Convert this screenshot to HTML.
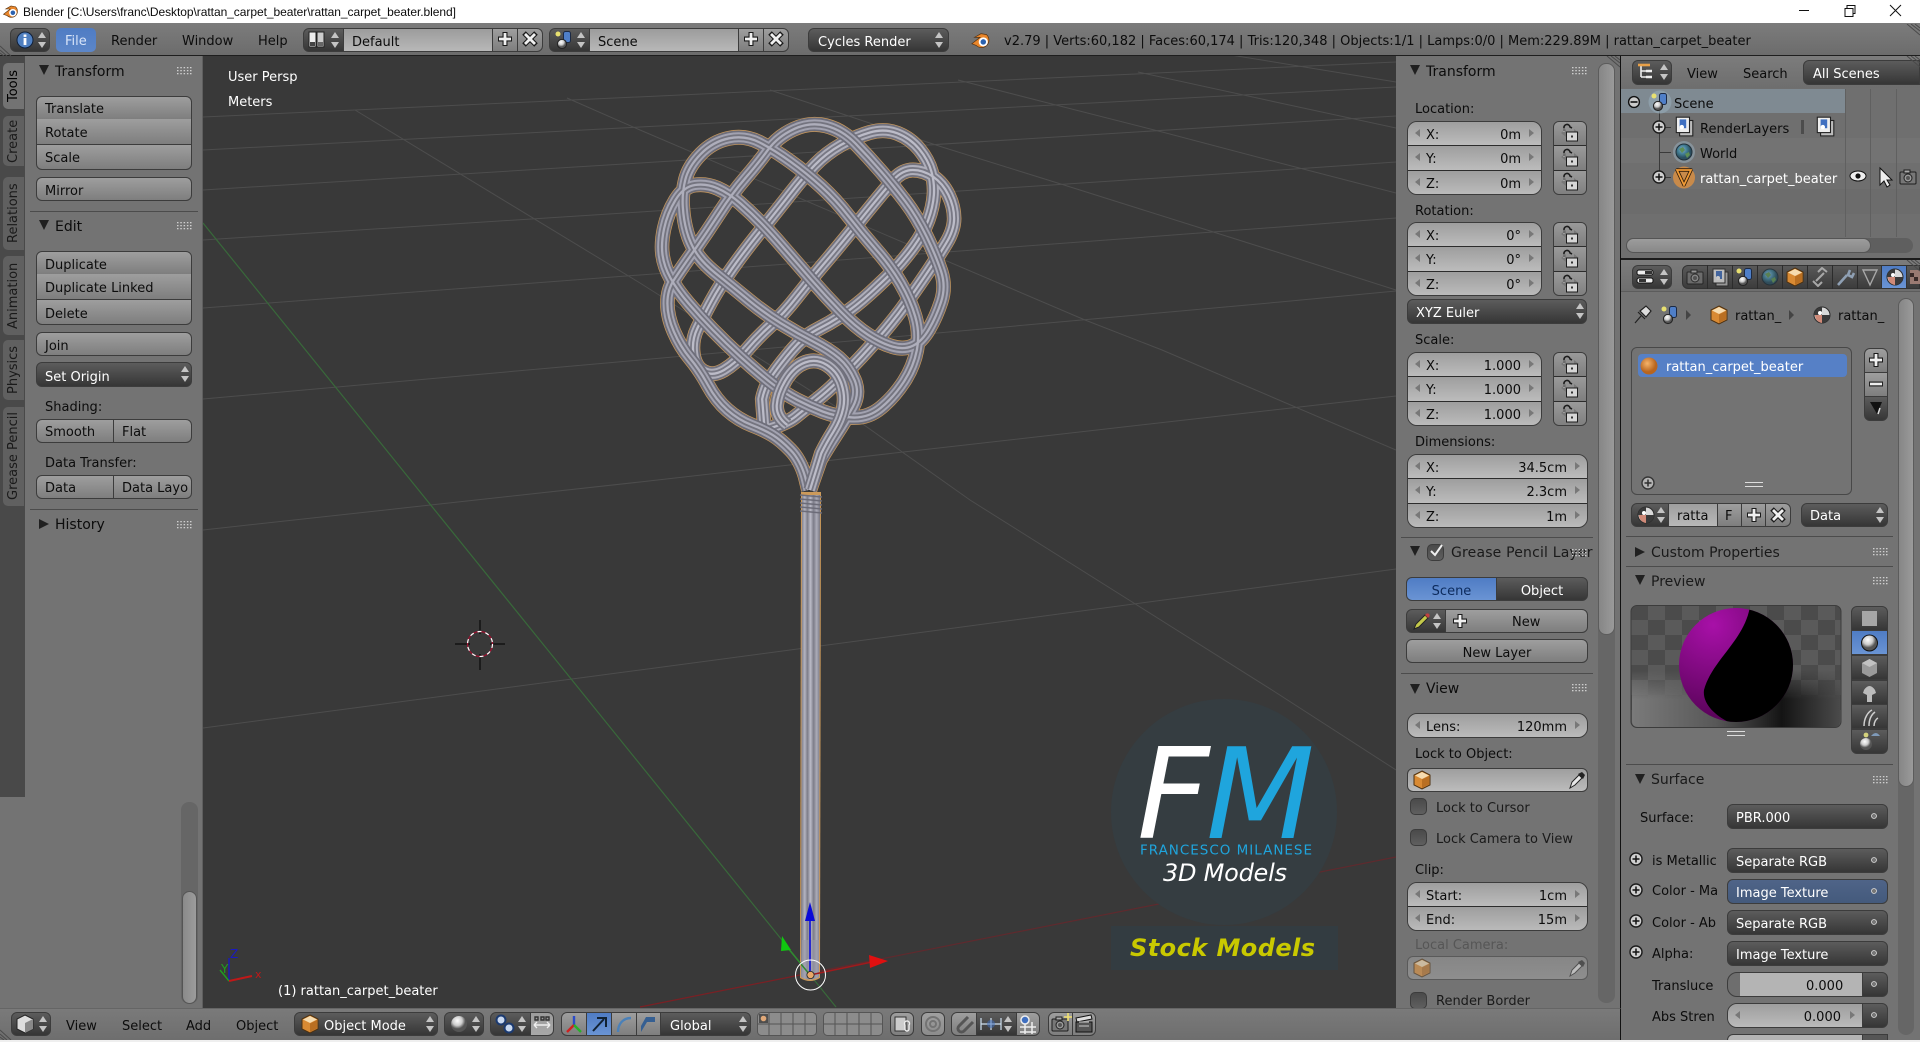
<!DOCTYPE html>
<html><head><meta charset="utf-8"><title>Blender</title>
<style>
*{box-sizing:border-box}
html,body{margin:0;width:1920px;height:1042px;overflow:hidden;background:#737373;font:13px "DejaVu Sans",sans-serif;color:#0c0c0c}
.a{position:absolute}
.t{position:absolute;white-space:nowrap;line-height:16px;height:16px;margin-top:1px}
.w{color:#fff}
.b{position:absolute;border:1px solid #3c3c3c;background:linear-gradient(#9e9e9e,#7e7e7e);line-height:27px;padding-left:8px;white-space:nowrap;overflow:hidden}
.k{background:linear-gradient(#5c5c5c,#363636);color:#fff}
.r{border-radius:6px}.rt{border-radius:6px 6px 0 0}.rb{border-radius:0 0 6px 6px}
.rl{border-radius:6px 0 0 6px}.rr{border-radius:0 6px 6px 0}
.ng{position:absolute;border:1px solid #3c3c3c;border-radius:10px;overflow:hidden}
.n{position:relative;height:24.4px;background:linear-gradient(#9e9e9e,#bcbcbc);border-bottom:1px solid #2c2c2c;line-height:27px;padding-left:18px;white-space:nowrap}
.n:last-child{border-bottom:0}
.n s{position:absolute;right:20px;top:0;text-decoration:none}
.n:before,.n:after{content:"";position:absolute;top:7px;border:4px solid transparent}
.n:before{left:3px;border-right:5px solid #787878}
.n:after{right:3px;border-left:5px solid #787878}
.td{position:absolute;width:0;height:0;border-left:5px solid transparent;border-right:5px solid transparent;border-top:10px solid #202020}
.tr{position:absolute;width:0;height:0;border-top:5px solid transparent;border-bottom:5px solid transparent;border-left:10px solid #202020}
.sep{position:absolute;height:1px;background:#4c4c4c;border-bottom:0}
.h{font-size:14px}
.tab{position:absolute;left:3px;width:21px;background:#606060;border-radius:5px 0 0 5px}
.tab span{position:absolute;left:0;top:0;width:21px;height:100%;writing-mode:vertical-rl;transform:rotate(180deg);text-align:center;line-height:21px;color:#1a1a1a}
.i{position:absolute;width:20px;height:20px;overflow:visible}
.cb{position:absolute;width:17px;height:17px;border:1px solid #3c3c3c;border-radius:5px;background:linear-gradient(#4a4a4a,#5f5f5f)}
svg{display:block}
</style></head>
<body>
<svg width="0" height="0" style="position:absolute">
<defs>
<linearGradient id="st" x1="0" x2="1" y1="0" y2="0"><stop offset="0" stop-color="#767682"/><stop offset=".2" stop-color="#b4b4c0"/><stop offset=".34" stop-color="#7c7c88"/><stop offset=".5" stop-color="#bcbcc8"/><stop offset=".66" stop-color="#7c7c88"/><stop offset=".82" stop-color="#acacb8"/><stop offset="1" stop-color="#767682"/></linearGradient>
<radialGradient id="balo" cx=".4" cy=".35"><stop offset="0" stop-color="#f6b46a"/><stop offset="1" stop-color="#b8651f"/></radialGradient>
<radialGradient id="balw" cx=".4" cy=".3"><stop offset="0" stop-color="#fff"/><stop offset=".6" stop-color="#ccc"/><stop offset="1" stop-color="#555"/></radialGradient>
<radialGradient id="balb" cx=".4" cy=".35"><stop offset="0" stop-color="#7fb0d8"/><stop offset=".6" stop-color="#3f7a8f"/><stop offset="1" stop-color="#2c4f60"/></radialGradient>
<radialGradient id="mag" cx=".3" cy=".15" r=".8"><stop offset="0" stop-color="#a810a8"/><stop offset="1" stop-color="#5c045c"/></radialGradient>
<linearGradient id="flr" x1="0" x2="1" y1="0" y2="0"><stop offset="0" stop-color="#7a7a7a"/><stop offset=".4" stop-color="#585858"/><stop offset=".72" stop-color="#141414"/><stop offset="1" stop-color="#4a4a4a"/></linearGradient>
<linearGradient id="fmask" x1="0" x2="0" y1="0" y2="1"><stop offset="0" stop-color="#fff" stop-opacity="0"/><stop offset=".5" stop-color="#fff" stop-opacity="1"/></linearGradient>
<mask id="fm" maskUnits="userSpaceOnUse" x="1631" y="670" width="210" height="58"><rect x="1631" y="670" width="210" height="58" fill="url(#fmask)"/></mask>
<pattern id="chk" width="34" height="30" patternUnits="userSpaceOnUse" x="1631" y="605"><rect width="34" height="30" fill="#5a5a5a"/><rect width="17" height="15" fill="#4b4b4b"/><rect x="17" y="15" width="17" height="15" fill="#4b4b4b"/></pattern>
<clipPath id="sph"><circle cx="1736" cy="665" r="57"/></clipPath>
<path id="k1" d="M535 1170L525 1130Q510 1080 480 1050T425 1005T360 975T285 930T225 855T170 775T120 695T100 610T120 540T180 455T260 340T340 235T410 150T490 87.5T590 77.5T680 130T760 215T835 305T900 410T945 515T945 605T907.5 687.5T857.5 737.5T795 740T720 705T635 635T545 540T460 445T390 370T325 310T255 265T185 255T125 300T90 385T85 465T110 535T165 610T240 690T325 770T415 845T500 900T580 935T670 952.5T760 922.5T830 845T870 750T865 650T820 550T745 450T660 350T575 260T480 185T385 127.5T290 115T202.5 162.5T155 240T147.5 320T160 395T190 460T255 525T350 600T450 670T550 725T630 775T677.5 840T672.5 920T620 1005T572.5 1080L540 1170" fill="none" stroke-linejoin="round"/>
<path id="k2" d="M400 990Q470 970 495 950T560 900T650 820T750 715T840 605T907.5 510T960 430T985 355T967.5 285T920 230T857.5 210T797.5 240T695 360T580 495T500 590T420 675T345 750T275 810T212.5 815T180 760T192.5 685T235 605T300 505T390 390T480 280T555 195T635 135T725 97.5T810 100T877.5 147.5T915 215T922.5 285T905 360T860 440T800 510T725 580T640 645T560 690T485 750T425 825T392.5 897.5L400 990" fill="none" stroke-linejoin="round"/>
<path id="k3" d="M470 975Q435 950 437.5 915T465 840T525 787.5T592.5 795T637.5 852.5T642.5 925T612.5 995T575 1060L540 1170" fill="none" stroke-linejoin="round"/>
<symbol id="lock" viewBox="0 0 20 20"><path d="M4 8V5a3 3 0 0 1 6-1l2 1" fill="none" stroke="#1c1c1c" stroke-width="1.6"/><path d="M4 9V5" stroke="#eee" stroke-width=".6"/><rect x="6.5" y="9" width="11" height="9" fill="#d6d6d6" stroke="#1c1c1c"/><rect x="11" y="12.5" width="2" height="2" fill="#333"/></symbol>
<symbol id="ud" viewBox="0 0 10 20"><polygon points="5,2 9,8 1,8" fill="#c4c4c4"/><polygon points="1,12 9,12 5,18" fill="#c4c4c4"/></symbol>
<symbol id="plus" viewBox="0 0 20 20"><path d="M10 3V17M3 10H17" stroke="#1a1a1a" stroke-width="5"/><path d="M10 4V16M4 10H16" stroke="#f0f0f0" stroke-width="2.8"/></symbol>
<symbol id="x" viewBox="0 0 20 20"><path d="M4 4L16 16M16 4L4 16" stroke="#1a1a1a" stroke-width="5"/><path d="M5 5L15 15M15 5L5 15" stroke="#f0f0f0" stroke-width="2.8"/></symbol>
<symbol id="cube" viewBox="0 0 20 20"><polygon points="10,1 18,5 18,15 10,19 2,15 2,5" fill="#d98a33" stroke="#4c3010"/><polygon points="10,2 17,5.5 10,9 3,5.5" fill="#f6dcb0"/><polygon points="10,9.5 17,6 17,14.5 10,18" fill="#b96f22"/></symbol>
<symbol id="scene" viewBox="0 0 20 20"><circle cx="4" cy="4" r="2.5" fill="#e8e070"/><rect x="9.5" y="1.5" width="7" height="11" rx="2" fill="#4f7fc8" stroke="#1c2a44"/><circle cx="8" cy="14" r="4.6" fill="url(#balw)" stroke="#222"/></symbol>
<symbol id="mat" viewBox="0 0 20 20"><circle cx="10" cy="10" r="8" fill="#d9d9d9" stroke="#2a2a2a"/><path d="M10 2a8 8 0 0 0-8 8h8zM10 10h8a8 8 0 0 1-8 8z" fill="#3a3a3a"/><path d="M10 10h-7a8 8 0 0 0 7 8z" fill="#d08a78"/><circle cx="8" cy="8" r="2" fill="#fff"/></symbol>
<symbol id="rl" viewBox="0 0 20 20"><rect x="6" y="5" width="12" height="14" fill="#bdbdbd" stroke="#222"/><rect x="3" y="2" width="12" height="14" fill="#eee" stroke="#222"/><rect x="6" y="4" width="6" height="8" fill="#3f6fc0"/><circle cx="8" cy="11" r="2" fill="#fff"/></symbol>
<symbol id="world" viewBox="0 0 20 20"><circle cx="10" cy="10" r="8" fill="url(#balb)" stroke="#20303a"/><path d="M5 7l4-2 2 3-3 3zM11 12l4-2 1 3-3 3z" fill="#5d8e55"/></symbol>
<symbol id="mesh" viewBox="0 0 20 20"><path d="M3 3H17L10 18Z" fill="none" stroke="#2c1a08" stroke-width="3.4" stroke-linejoin="round"/><path d="M3 3H17L10 18Z" fill="none" stroke="#f09a36" stroke-width="1.8"/></symbol>
<symbol id="cp" viewBox="0 0 20 20"><circle cx="10" cy="10" r="6" fill="#cfcfcf" stroke="#1c1c1c" stroke-width="1.4"/><path d="M10 6.5V13.5M6.5 10H13.5" stroke="#111" stroke-width="1.5"/></symbol>
<symbol id="grip" viewBox="0 0 15 8"><g fill="#cfcfcf"><rect x="0" y="0" width="1.5" height="1.3"/><rect x="3.3" y="0" width="1.5" height="1.3"/><rect x="6.6" y="0" width="1.5" height="1.3"/><rect x="9.9" y="0" width="1.5" height="1.3"/><rect x="13" y="0" width="1.5" height="1.3"/><rect x="0" y="3" width="1.5" height="1.3"/><rect x="3.3" y="3" width="1.5" height="1.3"/><rect x="6.6" y="3" width="1.5" height="1.3"/><rect x="9.9" y="3" width="1.5" height="1.3"/><rect x="13" y="3" width="1.5" height="1.3"/><rect x="0" y="6" width="1.5" height="1.3"/><rect x="3.3" y="6" width="1.5" height="1.3"/><rect x="6.6" y="6" width="1.5" height="1.3"/><rect x="9.9" y="6" width="1.5" height="1.3"/><rect x="13" y="6" width="1.5" height="1.3"/></g></symbol>
<symbol id="cam" viewBox="0 0 20 20"><rect x="2" y="5" width="16" height="12" rx="1" fill="#777" stroke="#1c1c1c"/><rect x="6" y="3" width="6" height="3" fill="#aaa" stroke="#1c1c1c"/><circle cx="10" cy="11" r="4" fill="#999" stroke="#222"/><circle cx="10" cy="11" r="2" fill="#555"/></symbol>
<symbol id="blend" viewBox="0 0 24 24"><path d="M2 15L11 8H5l7-4 6 1a8 8 0 1 1-11 12z" fill="#e9862b" stroke="#5a3410" stroke-width=".8"/><circle cx="14.5" cy="13" r="5" fill="#fff"/><circle cx="14.5" cy="13" r="3" fill="#2b62b0"/></symbol>
</defs>
</svg>

<!-- viewport -->
<div class="a" style="left:203px;top:56px;width:1193px;height:952px;background:#393939"></div>
<svg class="a" style="left:0;top:0" width="1920" height="1042" viewBox="0 0 1920 1042">
<defs><clipPath id="vp"><rect x="203" y="56" width="1193" height="952"/></clipPath></defs>
<g clip-path="url(#vp)">
<g stroke="#4d4d4d" stroke-width="1" fill="none">
<path d="M203 117L1396 62M203 150L640 127L1280 93L1396 87M203 190L640 163L1280 123L1396 116M203 240L640 212L1280 170L1396 162M203 308L640 275L1280 227L1396 218M203 399L640 360L1280 302L1396 291M203 530L640 482L1396 396M203 728L640 670L1396 569"/>
<path d="M355 110L640 283L857 420L970 500L1272 690L1396 770M567 98L640 130L1085 320L1162 350L1396 450M770 90L942 147L1064 185L1207 230L1280 253L1396 290M958 80L1048 103L1166 133L1280 163L1396 193M1138 72L1280 103L1396 128M1200 50L1280 63L1396 82"/>
</g>
<path d="M203 223L836 1007" stroke="#38693a" stroke-width="1.2" fill="none"/>
<path d="M640 1007L810 973" stroke="#7a2024" stroke-width="1.2" fill="none"/>
<path d="M810 973L1396 857" stroke="#5f2a2e" stroke-width="1.2" fill="none"/>
<!-- cursor -->
<g fill="none"><path d="M480 620V634M480 654V670M455 644H470M490 644H505" stroke="#000" stroke-width="1"/><circle cx="480" cy="644" r="12.5" stroke="#a01030" stroke-width="1.2"/><circle cx="480" cy="644" r="12.5" stroke="#fff" stroke-width="1.2" stroke-dasharray="4 4"/></g>
<!-- knot -->
<g transform="translate(635 100) scale(.324 .3333)">
<g stroke="#cc9a5a"><use href="#k1" stroke-width="45"/><use href="#k2" stroke-width="45"/><use href="#k3" stroke-width="45"/></g>
<g id="ropes">
<use href="#k2" stroke="#72727e" stroke-width="41"/><use href="#k2" stroke="#aeaeba" stroke-width="30"/><use href="#k2" stroke="#787884" stroke-width="18"/><use href="#k2" stroke="#bcbcc8" stroke-width="7"/>
<use href="#k1" stroke="#6e6e7a" stroke-width="41"/><use href="#k1" stroke="#a2a2b0" stroke-width="30"/><use href="#k1" stroke="#74747f" stroke-width="18"/><use href="#k1" stroke="#aeaebb" stroke-width="7"/>
<use href="#k3" stroke="#72727e" stroke-width="41"/><use href="#k3" stroke="#aeaeba" stroke-width="30"/><use href="#k3" stroke="#787884" stroke-width="18"/><use href="#k3" stroke="#bcbcc8" stroke-width="7"/>
</g>
</g>
<!-- stem -->
<path d="M801 492H821L820 978Q810 984 800 978Z" fill="#cc9a5a"/>
<path d="M802 495H820L819 977Q810 982 801 977Z" fill="url(#st)"/>
<g stroke="#6c6c78" stroke-width="1.4"><path d="M800 495L822 497M800 499L822 501M800 503L822 505M800 507L822 509M800 511L822 513"/></g>
<path d="M802 940L819 940L819 977Q810 982 801 977Z" fill="#9a9aa8" opacity=".6"/>
<!-- manipulator -->
<path d="M810 975V918" stroke="#0a0ad8" stroke-width="1.6"/><polygon points="810,902 815,921 805,921" fill="#0a0ad8"/>
<path d="M810 975L872 962" stroke="#a01a1c" stroke-width="1.6"/><polygon points="888,961 869,955 870,968" fill="#e01010"/>
<path d="M810 975L787 947" stroke="#2f8a2f" stroke-width="1.4"/><polygon points="782,936 791,950 781,951" fill="#10c810"/>
<circle cx="810.5" cy="975" r="15" fill="none" stroke="#fff" stroke-width="1"/>
<circle cx="810.5" cy="975" r="3.6" fill="#e8a868" stroke="#222" stroke-width=".8"/>
<!-- axis widget -->
<path d="M229 981V958" stroke="#1a1ac0" stroke-width="1.4"/><path d="M229 981L220 970" stroke="#1fa01f" stroke-width="1.4"/><path d="M229 981L252 976" stroke="#c01818" stroke-width="2"/>
<text x="230" y="958" font-family="DejaVu Sans" font-size="12" fill="#1a1ac0">Z</text>
<text x="221" y="973" font-family="DejaVu Sans" font-size="12" fill="#1fa01f">Y</text>
<text x="255" y="978" font-family="DejaVu Sans" font-size="11" fill="#c01818">x</text>
<!-- logo -->
<circle cx="1224" cy="812" r="113" fill="#353d41"/>
<rect x="1111" y="926" width="227" height="44" fill="#333c41"/>
<text x="1137" y="838" font-family="DejaVu Sans" font-style="oblique" font-size="126" fill="#fff">F</text>
<text x="1206" y="838" font-family="DejaVu Sans" font-style="oblique" font-size="126" fill="#1fa5dd">M</text>
<text x="1140" y="854.5" font-family="DejaVu Sans" font-size="13.5" fill="#1fa5dd" textLength="172" lengthAdjust="spacing">FRANCESCO MILANESE</text>
<text x="1163" y="881" font-family="DejaVu Sans" font-style="oblique" font-size="24" fill="#fff" textLength="124">3D Models</text>
<text x="1130" y="956" font-family="DejaVu Sans" font-style="oblique" font-weight="bold" font-size="24" fill="#c9c900" textLength="185">Stock Models</text>
</g>
</svg>
<div class="t w" style="left:228px;top:69px">User Persp</div>
<div class="t w" style="left:228px;top:94px">Meters</div>
<div class="t w" style="left:278px;top:983px">(1) rattan_carpet_beater</div>

<!-- title bar -->
<div class="a" style="left:0;top:0;width:1920px;height:23px;background:#fff"></div>
<svg class="i" style="left:2px;top:3px;width:18px;height:18px"><use href="#blend" width="18" height="18"/></svg>
<div class="t" style="left:23px;top:3px;font:12px/16px 'Liberation Sans',sans-serif;letter-spacing:-.05px">Blender [C:\Users\franc\Desktop\rattan_carpet_beater\rattan_carpet_beater.blend]</div>
<svg class="a" style="left:1796px;top:0" width="110" height="22" fill="none" stroke="#111"><path d="M3 10.5H13"/><path d="M49 8.5h8v8h-8zM51 8V5.5h8v8h-2"/><path d="M94 5L105 16M105 5L94 16"/></svg>

<!-- top header -->
<div class="a" style="left:0;top:23px;width:1920px;height:33px;background:linear-gradient(#7c7c7c,#6c6c6c);border-bottom:1px solid #1e1e1e"></div>
<svg class="a" style="left:0;top:44px" width="16" height="12" stroke="#4a4a4a"><path d="M0 2L11 12M0 6L7 12M0 9L4 12"/></svg>
<svg class="a" style="left:1905px;top:24px" width="15" height="14" stroke="#4a4a4a"><path d="M2 0L15 11M6 0L15 7M10 0L15 4"/></svg>
<div class="b k r" style="left:10px;top:28px;width:40px;height:24px"></div>
<svg class="i" style="left:15px;top:30px"><circle cx="10" cy="10" r="8" fill="#4f7fc0" stroke="#10203a"/><rect x="8.6" y="8" width="2.8" height="7" fill="#fff"/><rect x="8.6" y="4.5" width="2.8" height="2.4" fill="#fff"/></svg>
<svg class="i" style="left:37px;top:30px;width:10px"><use href="#ud"/></svg>
<div class="a" style="left:56px;top:28px;width:40px;height:24px;background:linear-gradient(#4f7cc4,#5c86c8);border-radius:5px"></div>
<div class="t" style="left:65px;top:33px;color:#d8e4f8">File</div>
<div class="t" style="left:111px;top:33px">Render</div>
<div class="t" style="left:182px;top:33px">Window</div>
<div class="t" style="left:258px;top:33px">Help</div>

<div class="b k rl" style="left:303px;top:28px;width:41px;height:24px"></div>
<svg class="i" style="left:308px;top:31px;width:18px;height:18px"><rect x="1" y="1" width="7" height="15" fill="#eee" stroke="#222"/><rect x="9" y="1" width="7" height="15" fill="#ccc" stroke="#222"/><rect x="2" y="11" width="5" height="4" fill="#444"/><rect x="10" y="11" width="5" height="4" fill="#666"/></svg>
<svg class="i" style="left:330px;top:30px;width:10px"><use href="#ud"/></svg>
<div class="b" style="left:343px;top:28px;width:150px;height:24px;background:linear-gradient(#9c9c9c,#b8b8b8);padding-left:8px">Default</div>
<div class="b" style="left:492px;top:28px;width:26px;height:24px"></div>
<div class="b rr" style="left:517px;top:28px;width:26px;height:24px"></div>
<svg class="i" style="left:495px;top:29px"><use href="#plus"/></svg>
<svg class="i" style="left:520px;top:29px"><use href="#x"/></svg>

<div class="b k rl" style="left:549px;top:28px;width:41px;height:24px"></div>
<svg class="i" style="left:554px;top:30px"><use href="#scene"/></svg>
<svg class="i" style="left:576px;top:30px;width:10px"><use href="#ud"/></svg>
<div class="b" style="left:589px;top:28px;width:150px;height:24px;background:linear-gradient(#9c9c9c,#b8b8b8);padding-left:8px">Scene</div>
<div class="b" style="left:738px;top:28px;width:26px;height:24px"></div>
<div class="b rr" style="left:763px;top:28px;width:26px;height:24px"></div>
<svg class="i" style="left:741px;top:29px"><use href="#plus"/></svg>
<svg class="i" style="left:766px;top:29px"><use href="#x"/></svg>

<div class="b k r" style="left:808px;top:28px;width:141px;height:24px;padding-left:9px">Cycles Render</div>
<svg class="i" style="left:934px;top:30px;width:10px"><use href="#ud"/></svg>
<svg class="i" style="left:970px;top:30px;width:22px;height:22px"><use href="#blend" width="22" height="22"/></svg>
<div class="t" style="left:1004px;top:33px">v2.79 | Verts:60,182 | Faces:60,174 | Tris:120,348 | Objects:1/1 | Lamps:0/0 | Mem:229.89M | rattan_carpet_beater</div>

<!-- left tools -->
<div class="a" style="left:0;top:56px;width:203px;height:952px;background:#737373;border-right:1px solid #5f5f5f"></div>
<div class="a" style="left:0;top:56px;width:25px;height:741px;background:#494949"></div>
<div class="tab" style="top:63px;height:46px;background:#737373"><span style="color:#000">Tools</span></div>
<div class="tab" style="top:116px;height:50px"><span>Create</span></div>
<div class="tab" style="top:177px;height:73px"><span>Relations</span></div>
<div class="tab" style="top:256px;height:79px"><span>Animation</span></div>
<div class="tab" style="top:340px;height:60px"><span>Physics</span></div>
<div class="tab" style="top:407px;height:99px"><span>Grease Pencil</span></div>

<div class="td" style="left:39px;top:65px"></div>
<div class="t h" style="left:55px;top:63px">Transform</div>
<svg class="a" style="left:177px;top:67px" width="15" height="8"><use href="#grip"/></svg>
<div class="b rt" style="left:36px;top:96px;width:156px;height:24px;line-height:26px">Translate</div>
<div class="b" style="left:36px;top:119px;width:156px;height:26px;border-top:0;line-height:29px">Rotate</div>
<div class="b rb" style="left:36px;top:144px;width:156px;height:26px;line-height:28px">Scale</div>
<div class="b r" style="left:36px;top:177px;width:156px;height:24px">Mirror</div>
<div class="sep" style="left:30px;top:211px;width:168px"></div>
<div class="td" style="left:39px;top:220px"></div>
<div class="t h" style="left:55px;top:218px">Edit</div>
<svg class="a" style="left:177px;top:222px" width="15" height="8"><use href="#grip"/></svg>
<div class="b rt" style="left:36px;top:251px;width:156px;height:24px">Duplicate</div>
<div class="b" style="left:36px;top:274px;width:156px;height:26px;border-top:0;line-height:30px">Duplicate Linked</div>
<div class="b rb" style="left:36px;top:299px;width:156px;height:26px;line-height:29px">Delete</div>
<div class="b r" style="left:36px;top:332px;width:156px;height:24px">Join</div>
<div class="b k r" style="left:36px;top:362px;width:156px;height:25px;line-height:29px">Set Origin</div>
<svg class="i" style="left:180px;top:364px;width:10px"><use href="#ud"/></svg>
<div class="t" style="left:45px;top:399px">Shading:</div>
<div class="b rl" style="left:36px;top:419px;width:78px;height:24px;line-height:26px">Smooth</div>
<div class="b rr" style="left:113px;top:419px;width:79px;height:24px;line-height:26px">Flat</div>
<div class="t" style="left:45px;top:455px">Data Transfer:</div>
<div class="b rl" style="left:36px;top:475px;width:78px;height:24px;line-height:26px">Data</div>
<div class="b rr" style="left:113px;top:475px;width:79px;height:24px;line-height:26px">Data Layo</div>
<div class="sep" style="left:30px;top:509px;width:168px"></div>
<div class="tr" style="left:39px;top:519px"></div>
<div class="t h" style="left:55px;top:516px">History</div>
<svg class="a" style="left:177px;top:521px" width="15" height="8"><use href="#grip"/></svg>
<div class="a" style="left:181px;top:802px;width:17px;height:202px;background:#666;border-radius:8px"></div>
<div class="a" style="left:182px;top:891px;width:15px;height:113px;background:linear-gradient(90deg,#8a8a8a,#9c9c9c);border:1px solid #555;border-radius:8px"></div>

<!-- N panel -->
<div class="a" style="left:1396px;top:56px;width:225px;height:952px;background:#737373;border-right:1px solid #111"></div>
<div class="a" style="left:1598px;top:63px;width:17px;height:940px;background:#666;border-radius:8px"></div>
<div class="a" style="left:1598px;top:63px;width:17px;height:572px;background:linear-gradient(90deg,#868686,#9a9a9a);border:1px solid #5c5c5c;border-radius:8px"></div>
<svg class="a" style="left:1605px;top:56px" width="15" height="14" stroke="#4a4a4a"><path d="M2 0L15 11M6 0L15 7M10 0L15 4"/></svg>
<div class="td" style="left:1410px;top:65px"></div>
<div class="t h" style="left:1426px;top:63px">Transform</div>
<svg class="a" style="left:1572px;top:67px" width="15" height="8"><use href="#grip"/></svg>

<div class="t" style="left:1415px;top:101px">Location:</div>
<div class="ng" style="left:1407px;top:121px;width:135px;height:74px"><div class="n">X:<s>0m</s></div><div class="n">Y:<s>0m</s></div><div class="n">Z:<s>0m</s></div></div>
<div class="ng" style="left:1553px;top:121px;width:34px;height:74px;border-radius:6px"><div class="n" style="background:linear-gradient(#9a9a9a,#7e7e7e)"></div><div class="n" style="background:linear-gradient(#9a9a9a,#7e7e7e)"></div><div class="n" style="background:linear-gradient(#9a9a9a,#7e7e7e)"></div></div>
<svg class="i" style="left:1560px;top:123px"><use href="#lock"/></svg><svg class="i" style="left:1560px;top:148px"><use href="#lock"/></svg><svg class="i" style="left:1560px;top:172px"><use href="#lock"/></svg>

<div class="t" style="left:1415px;top:203px">Rotation:</div>
<div class="ng" style="left:1407px;top:222px;width:135px;height:74px"><div class="n">X:<s>0°</s></div><div class="n">Y:<s>0°</s></div><div class="n">Z:<s>0°</s></div></div>
<div class="ng" style="left:1553px;top:222px;width:34px;height:74px;border-radius:6px"><div class="n" style="background:linear-gradient(#9a9a9a,#7e7e7e)"></div><div class="n" style="background:linear-gradient(#9a9a9a,#7e7e7e)"></div><div class="n" style="background:linear-gradient(#9a9a9a,#7e7e7e)"></div></div>
<svg class="i" style="left:1560px;top:225px"><use href="#lock"/></svg><svg class="i" style="left:1560px;top:249px"><use href="#lock"/></svg><svg class="i" style="left:1560px;top:274px"><use href="#lock"/></svg>
<div class="b k r" style="left:1407px;top:299px;width:180px;height:25px">XYZ Euler</div>
<svg class="i" style="left:1575px;top:301px;width:10px"><use href="#ud"/></svg>

<div class="t" style="left:1415px;top:332px">Scale:</div>
<div class="ng" style="left:1407px;top:352px;width:135px;height:74px"><div class="n">X:<s>1.000</s></div><div class="n">Y:<s>1.000</s></div><div class="n">Z:<s>1.000</s></div></div>
<div class="ng" style="left:1553px;top:352px;width:34px;height:74px;border-radius:6px"><div class="n" style="background:linear-gradient(#9a9a9a,#7e7e7e)"></div><div class="n" style="background:linear-gradient(#9a9a9a,#7e7e7e)"></div><div class="n" style="background:linear-gradient(#9a9a9a,#7e7e7e)"></div></div>
<svg class="i" style="left:1560px;top:355px"><use href="#lock"/></svg><svg class="i" style="left:1560px;top:379px"><use href="#lock"/></svg><svg class="i" style="left:1560px;top:404px"><use href="#lock"/></svg>

<div class="t" style="left:1415px;top:434px">Dimensions:</div>
<div class="ng" style="left:1407px;top:454px;width:181px;height:74px"><div class="n">X:<s>34.5cm</s></div><div class="n">Y:<s>2.3cm</s></div><div class="n">Z:<s>1m</s></div></div>
<div class="sep" style="left:1401px;top:537px;width:192px"></div>
<div class="td" style="left:1410px;top:546px"></div>
<div class="cb" style="left:1427px;top:544px"></div>
<svg class="a" style="left:1427px;top:542px" width="18" height="18" fill="none" stroke="#f0f0f0" stroke-width="2"><path d="M4 9L8 13L15 3"/></svg>
<div class="t h" style="left:1451px;top:544px;color:#1a1a1a;letter-spacing:.18px">Grease Pencil Layer</div>
<svg class="a" style="left:1572px;top:549px" width="15" height="8"><use href="#grip"/></svg>
<div class="b rl" style="left:1406px;top:577px;width:91px;height:24px;background:linear-gradient(#4f7cc4,#6a94d4);color:#0c2a5c;padding:0;text-align:center">Scene</div>
<div class="b k rr" style="left:1496px;top:577px;width:92px;height:24px;padding:0;text-align:center">Object</div>
<div class="b k rl" style="left:1406px;top:609px;width:40px;height:24px"></div>
<svg class="a" style="left:1411px;top:611px" width="20" height="20"><path d="M3 18L5 13L14 4L17 7L8 16Z" fill="#c4c94a" stroke="#222"/><path d="M14 4L17 7L18 6a2 2 0 0 0-3-3z" fill="#c04040"/></svg>
<svg class="i" style="left:1432px;top:611px;width:10px"><use href="#ud"/></svg>
<div class="b rr" style="left:1445px;top:609px;width:143px;height:24px;padding:0 0 0 66px;line-height:26px">New</div>
<svg class="i" style="left:1450px;top:611px"><use href="#plus"/></svg>
<div class="b r" style="left:1406px;top:639px;width:182px;height:24px;padding:0;text-align:center;line-height:28px">New Layer</div>
<div class="sep" style="left:1401px;top:673px;width:192px"></div>
<div class="td" style="left:1410px;top:684px"></div>
<div class="t h" style="left:1426px;top:680px">View</div>
<svg class="a" style="left:1572px;top:684px" width="15" height="8"><use href="#grip"/></svg>
<div class="ng" style="left:1407px;top:713px;width:181px;height:25px"><div class="n">Lens:<s>120mm</s></div></div>
<div class="t" style="left:1415px;top:746px">Lock to Object:</div>
<div class="b r" style="left:1407px;top:768px;width:181px;height:24px;background:linear-gradient(#9e9e9e,#bcbcbc)"></div>
<svg class="i" style="left:1412px;top:770px"><use href="#cube"/></svg>
<svg class="a" style="left:1567px;top:769px" width="20" height="22"><path d="M3 19L5 13L12 6L15 9L8 16Z" fill="#e8e8e8" stroke="#222"/><path d="M11 5L16 10L18 6L15 3Z" fill="#222"/></svg>
<div class="cb" style="left:1410px;top:798px"></div>
<div class="t" style="left:1436px;top:800px;color:#1a1a1a">Lock to Cursor</div>
<div class="cb" style="left:1410px;top:829px"></div>
<div class="t" style="left:1436px;top:831px;color:#1a1a1a">Lock Camera to View</div>
<div class="t" style="left:1415px;top:862px">Clip:</div>
<div class="ng" style="left:1407px;top:882px;width:181px;height:49px"><div class="n">Start:<s>1cm</s></div><div class="n">End:<s>15m</s></div></div>
<div class="t" style="left:1415px;top:937px;color:#565656">Local Camera:</div>
<div class="b r" style="left:1407px;top:956px;width:181px;height:24px;background:linear-gradient(#868686,#8e8e8e);border-color:#5a5a5a"></div>
<svg class="i" style="left:1412px;top:958px;opacity:.6"><use href="#cube"/></svg>
<svg class="a" style="left:1567px;top:957px;opacity:.55" width="20" height="22"><path d="M3 19L5 13L12 6L15 9L8 16Z" fill="#e8e8e8" stroke="#222"/><path d="M11 5L16 10L18 6L15 3Z" fill="#222"/></svg>
<div class="cb" style="left:1410px;top:992px"></div>
<div class="t" style="left:1436px;top:993px;color:#1a1a1a">Render Border</div>

<!-- bottom bar -->
<div class="a" style="left:0;top:1008px;width:1621px;height:32px;background:linear-gradient(#7a7a7a,#6e6e6e);border-top:1px solid #656565;border-right:1px solid #111"></div>
<div class="a" style="left:0;top:1040px;width:1920px;height:2px;background:#efefef"></div>
<div class="a" style="left:197px;top:1040px;width:48px;height:2px;background:#fff"></div>
<svg class="a" style="left:0;top:1028px" width="16" height="12" stroke="#4a4a4a"><path d="M0 2L11 12M0 6L7 12M0 9L4 12"/></svg>
<svg class="a" style="left:1621px;top:1026px" width="16" height="14" stroke="#4a4a4a"><path d="M0 2L13 14M0 6L9 14M0 10L5 14"/></svg>
<div class="b k r" style="left:11px;top:1012px;width:40px;height:24px"></div>
<svg class="i" style="left:15px;top:1014px"><polygon points="10,1 18,5 18,15 10,19 2,15 2,5" fill="#ddd" stroke="#222"/><polygon points="10,9 18,5 18,15 10,19" fill="#888"/></svg>
<svg class="i" style="left:38px;top:1014px;width:10px"><use href="#ud"/></svg>
<div class="t" style="left:66px;top:1018px">View</div>
<div class="t" style="left:122px;top:1018px">Select</div>
<div class="t" style="left:186px;top:1018px">Add</div>
<div class="t" style="left:236px;top:1018px">Object</div>
<div class="b k r" style="left:294px;top:1012px;width:144px;height:24px;padding-left:29px">Object Mode</div>
<svg class="i" style="left:300px;top:1014px"><use href="#cube"/></svg>
<svg class="i" style="left:425px;top:1014px;width:10px"><use href="#ud"/></svg>
<div class="b k r" style="left:444px;top:1012px;width:40px;height:24px"></div>
<svg class="i" style="left:449px;top:1014px"><circle cx="10" cy="10" r="8" fill="url(#balw)"/></svg>
<svg class="i" style="left:471px;top:1014px;width:10px"><use href="#ud"/></svg>
<div class="b k rl" style="left:490px;top:1012px;width:41px;height:24px"></div>
<svg class="i" style="left:495px;top:1014px" fill="#c8d8f0" stroke="#1b3a70" stroke-width="2"><circle cx="6" cy="6" r="4.5"/><circle cx="14" cy="14" r="4.5"/></svg>
<svg class="i" style="left:517px;top:1014px;width:10px"><use href="#ud"/></svg>
<div class="b rr" style="left:530px;top:1012px;width:24px;height:24px;background:linear-gradient(#9c9c9c,#a8a8a8)"></div>
<svg class="i" style="left:532px;top:1014px" fill="none" stroke="#eee" stroke-width="1.4"><path d="M2 11H18M2 11l3-3M2 11l3 3M18 11l-3-3M18 11l-3 3"/><path d="M3 3h3v3h-3zM9 3h3v3h-3zM14 3h3v3h-3z" stroke="#333"/></svg>
<div class="b rl" style="left:561px;top:1012px;width:26px;height:24px"></div>
<svg class="i" style="left:564px;top:1014px" fill="none" stroke-width="2.4"><path d="M10 2V11" stroke="#2a4ac8"/><path d="M10 11L3 18" stroke="#d02020"/><path d="M10 11L17 18" stroke="#28b028"/></svg>
<div class="b" style="left:586px;top:1012px;width:26px;height:24px;background:linear-gradient(#4f7cc4,#6a94d4)"></div>
<svg class="i" style="left:589px;top:1014px" fill="none" stroke="#123" stroke-width="2"><path d="M4 17L15 5M8 4h9v9"/></svg>
<div class="b" style="left:611px;top:1012px;width:26px;height:24px"></div>
<svg class="i" style="left:614px;top:1014px" fill="none" stroke="#4a80b8" stroke-width="2.4"><path d="M4 18C4 10 9 4 17 4"/></svg>
<div class="b" style="left:636px;top:1012px;width:25px;height:24px"></div>
<svg class="i" style="left:638px;top:1014px" fill="#355f92"><path d="M3 18L9 8H17V3H8L3 12Z"/></svg>
<div class="b k rr" style="left:660px;top:1012px;width:91px;height:24px;padding-left:9px">Global</div>
<svg class="i" style="left:738px;top:1014px;width:10px"><use href="#ud"/></svg>
<svg class="a" style="left:757px;top:1012px" width="60" height="24"><rect x=".5" y=".5" width="59" height="23" rx="4" fill="#8c8c8c" stroke="#555"/><path d="M12 0V24M24 0V24M36 0V24M48 0V24M0 12H60" stroke="#555"/><rect x="2" y="2" width="9" height="9" fill="#4e4e4e"/><circle cx="6.5" cy="6.5" r="2.8" fill="#e0a878"/></svg>
<svg class="a" style="left:823px;top:1012px" width="60" height="24"><rect x=".5" y=".5" width="59" height="23" rx="4" fill="#8c8c8c" stroke="#555"/><path d="M12 0V24M24 0V24M36 0V24M48 0V24M0 12H60" stroke="#555"/></svg>
<div class="b r" style="left:890px;top:1012px;width:24px;height:24px"></div>
<svg class="i" style="left:892px;top:1014px"><rect x="3" y="3" width="11" height="14" fill="#ccc" stroke="#333"/><path d="M13 11a2.5 2.5 0 1 1 4 0v4a2 2 0 1 1-4 0z" fill="none" stroke="#eee" stroke-width="1.4"/></svg>
<div class="b r" style="left:921px;top:1012px;width:24px;height:24px;background:linear-gradient(#a0a0a0,#8c8c8c)"></div>
<svg class="i" style="left:923px;top:1014px" fill="none" stroke="#737373" stroke-width="2"><circle cx="10" cy="10" r="7"/><circle cx="10" cy="10" r="3"/></svg>
<div class="b rl" style="left:951px;top:1012px;width:26px;height:24px"></div>
<svg class="i" style="left:954px;top:1014px" fill="none" stroke="#555" stroke-width="3"><path d="M14 3L5 12a3.4 3.4 0 0 0 5 5l9-9"/></svg>
<div class="b k" style="left:976px;top:1012px;width:41px;height:24px"></div>
<svg class="a" style="left:979px;top:1015px" width="24" height="18" stroke="#cfe0f0" stroke-width="1.2"><path d="M2 3V15M12 3V15M22 3V15M2 9H22"/><circle cx="12" cy="9" r="4" fill="#3f6fc0" opacity=".5" stroke="none"/></svg>
<svg class="i" style="left:1003px;top:1014px;width:10px"><use href="#ud"/></svg>
<div class="b rr" style="left:1016px;top:1012px;width:24px;height:24px"></div>
<svg class="i" style="left:1018px;top:1014px" stroke="#eee" stroke-width="1.5" fill="none"><path d="M2 13H18M2 18H18M7 8V20M14 8V20"/><circle cx="7" cy="6" r="4" fill="#3f6fc0" stroke="#eee"/></svg>
<div class="b rl" style="left:1048px;top:1012px;width:25px;height:24px"></div>
<div class="b rr" style="left:1072px;top:1012px;width:24px;height:24px"></div>
<svg class="i" style="left:1050px;top:1014px"><use href="#cam"/></svg>
<svg class="a" style="left:1064px;top:1013px" width="8" height="8" stroke="#f0e070" stroke-width="1.6"><path d="M4 0V8M0 4H8"/></svg>
<svg class="i" style="left:1074px;top:1014px"><rect x="2" y="8" width="16" height="10" fill="#555" stroke="#111"/><path d="M2 4L17 1L18 5L3 8Z" fill="#ddd" stroke="#111"/><path d="M5 8H15M5 12H15" stroke="#ccc"/></svg>

<!-- outliner -->
<div class="a" style="left:1621px;top:56px;width:299px;height:32px;background:linear-gradient(#7c7c7c,#6e6e6e)"></div>
<div class="b k r" style="left:1632px;top:60px;width:40px;height:25px"></div>
<svg class="i" style="left:1636px;top:62px" stroke="#eee" stroke-width="1.6" fill="none"><path d="M5 3V15M5 9H11M5 15H11"/><path d="M2 3H14" stroke="#e8a048" stroke-width="2.6"/><path d="M10 9H16M10 15H16" stroke-width="2.6"/></svg>
<svg class="i" style="left:1659px;top:62px;width:10px"><use href="#ud"/></svg>
<div class="t" style="left:1687px;top:66px">View</div>
<div class="t" style="left:1743px;top:66px">Search</div>
<div class="b k" style="left:1803px;top:60px;width:117px;height:25px;border-radius:6px 0 0 6px;padding-left:9px">All Scenes</div>
<svg class="a" style="left:1905px;top:56px" width="15" height="14" stroke="#4a4a4a"><path d="M2 0L15 11M6 0L15 7M10 0L15 4"/></svg>
<div class="a" style="left:1621px;top:88px;width:299px;height:171px;background:#6f6f6f"></div>
<div class="a" style="left:1621px;top:89px;width:224px;height:24px;background:#7f8a92"></div>
<div class="a" style="left:1621px;top:138px;width:299px;height:25px;background:#737373"></div>
<div class="a" style="left:1621px;top:189px;width:299px;height:25px;background:#6c6c6c"></div>
<div class="a" style="left:1845px;top:89px;width:1px;height:148px;background:#606060"></div>
<div class="a" style="left:1870px;top:89px;width:1px;height:148px;background:#606060"></div>
<div class="a" style="left:1896px;top:89px;width:1px;height:148px;background:#606060"></div>
<div class="a" style="left:1659px;top:110px;width:1px;height:68px;background:#3a3a3a"></div>
<div class="a" style="left:1659px;top:127px;width:12px;height:1px;background:#3a3a3a"></div>
<div class="a" style="left:1659px;top:177px;width:12px;height:1px;background:#3a3a3a"></div>
<div class="a" style="left:1659px;top:152px;width:12px;height:1px;background:#3a3a3a"></div>
<svg class="i" style="left:1624px;top:92px"><circle cx="10" cy="10" r="5.4" fill="#ccc" stroke="#111" stroke-width="1.4"/><path d="M6.5 10H13.5" stroke="#111" stroke-width="1.6"/></svg>
<svg class="a" style="left:1648px;top:90px" width="24" height="24"><circle cx="12" cy="12" r="11.5" fill="#93a6b4" opacity=".7"/></svg>
<svg class="i" style="left:1650px;top:92px"><use href="#scene"/></svg>
<div class="t" style="left:1674px;top:96px">Scene</div>
<svg class="i" style="left:1649px;top:117px"><use href="#cp"/></svg>
<svg class="i" style="left:1673px;top:115px;width:22px;height:22px"><use href="#rl" width="22" height="22"/></svg>
<div class="t" style="left:1700px;top:121px">RenderLayers</div>
<div class="a" style="left:1801px;top:120px;width:3px;height:14px;background:#4c4c4c"></div>
<svg class="i" style="left:1814px;top:115px;width:22px;height:22px"><use href="#rl" width="22" height="22"/></svg>
<svg class="a" style="left:1673px;top:141px" width="22" height="22"><circle cx="11" cy="11" r="11" fill="#93a6b4" opacity=".6"/></svg>
<svg class="i" style="left:1674px;top:142px"><use href="#world"/></svg>
<div class="t" style="left:1700px;top:146px">World</div>
<svg class="i" style="left:1649px;top:167px"><use href="#cp"/></svg>
<svg class="a" style="left:1673px;top:166px" width="22" height="23"><circle cx="11" cy="11.5" r="11" fill="#c88a4a"/></svg>
<svg class="i" style="left:1674px;top:167px"><use href="#mesh"/></svg>
<div class="t w" style="left:1700px;top:171px">rattan_carpet_beater</div>
<svg class="i" style="left:1848px;top:166px"><ellipse cx="10" cy="10" rx="8" ry="5" fill="#eee" stroke="#111"/><circle cx="10" cy="10" r="2.6" fill="#111"/></svg>
<svg class="i" style="left:1875px;top:167px"><path d="M5 1V18L9 14L12 20L15 18L12 13H17Z" fill="#eee" stroke="#111"/></svg>
<svg class="i" style="left:1898px;top:167px"><use href="#cam"/></svg>
<div class="a" style="left:1626px;top:238px;width:287px;height:15px;background:#5f5f5f;border-radius:8px"></div>
<div class="a" style="left:1626px;top:238px;width:245px;height:15px;background:linear-gradient(#9c9c9c,#888);border:1px solid #555;border-radius:8px"></div>
<div class="a" style="left:1621px;top:258px;width:299px;height:2px;background:#1c1c1c"></div>

<!-- properties -->
<div class="a" style="left:1621px;top:260px;width:299px;height:780px;background:#737373"></div>
<div class="a" style="left:1621px;top:260px;width:299px;height:32px;background:linear-gradient(#7c7c7c,#6e6e6e);border-bottom:1px solid #5c5c5c"></div>
<div class="b k r" style="left:1632px;top:265px;width:40px;height:24px"></div>
<svg class="i" style="left:1636px;top:267px"><rect x="1" y="3" width="16" height="5" rx="2" fill="#eee" stroke="#111"/><rect x="1" y="11" width="16" height="5" rx="2" fill="#eee" stroke="#111"/><rect x="9" y="4" width="7" height="3" fill="#333"/><rect x="3" y="12" width="7" height="3" fill="#333"/></svg>
<svg class="i" style="left:1659px;top:267px;width:10px"><use href="#ud"/></svg>
<div class="a" style="left:1682px;top:265px;width:238px;height:24px;background:linear-gradient(#595959,#3c3c3c);border:1px solid #333;border-radius:6px 0 0 6px"></div>
<div class="a" style="left:1707px;top:265px;width:188px;height:24px;background:repeating-linear-gradient(90deg,#2c2c2c 0 1px,transparent 1px 25px)"></div>
<div class="a" style="left:1881px;top:265px;width:26px;height:24px;background:linear-gradient(#4f7cc4,#6a94d4);border:1px solid #333"></div>
<svg class="a" style="left:1685px;top:267px" width="235" height="20">
<use href="#cam" width="20" height="20" opacity=".75"/>
<use href="#rl" x="25" width="20" height="20" opacity=".7"/>
<use href="#scene" x="50" width="20" height="20"/>
<use href="#world" x="75" width="20" height="20" opacity=".8"/>
<use href="#cube" x="100" width="20" height="20"/>
<g transform="translate(125 0)" fill="none" stroke="#a8a8a8" stroke-width="2"><path d="M3 14L8 19L12 15M17 5L12 1L8 5M6 14L14 6"/></g>
<g transform="translate(150 0)" fill="none" stroke="#8fa0b4" stroke-width="2.6"><path d="M3 18L12 8M15 3L13 8L17 10L19 6"/></g>
<g transform="translate(175 0)" fill="none" stroke="#a8a8a8" stroke-width="1.4"><path d="M3 3H17L10 18Z"/></g>
<use href="#mat" x="200" width="20" height="20"/>
<g transform="translate(225 0)"><rect y="3" width="10" height="14" fill="#9a7a72"/><path d="M0 6H4V10H0ZM4 10H8V14H4Z" fill="#3a2a28"/></g>
</svg>
<svg class="a" style="left:1905px;top:260px" width="15" height="14" stroke="#4a4a4a"><path d="M2 0L15 11M6 0L15 7M10 0L15 4"/></svg>

<div class="a" style="left:1898px;top:298px;width:16px;height:737px;background:#666;border-radius:8px"></div>
<div class="a" style="left:1898px;top:298px;width:16px;height:489px;background:linear-gradient(90deg,#868686,#9a9a9a);border:1px solid #5c5c5c;border-radius:8px"></div>

<svg class="i" style="left:1633px;top:304px"><path d="M2 19L8 12M5 8L12 15M7 7L13 2L18 7L13 13Z" fill="#ddd" stroke="#222" stroke-width="1.2"/></svg>
<svg class="i" style="left:1660px;top:305px"><use href="#scene"/></svg>
<svg class="a" style="left:1686px;top:310px" width="6" height="10"><path d="M0 0L5 5L0 10Z" fill="#444"/></svg>
<svg class="i" style="left:1709px;top:305px"><use href="#cube"/></svg>
<div class="t" style="left:1735px;top:308px">rattan_</div>
<svg class="a" style="left:1789px;top:310px" width="6" height="10"><path d="M0 0L5 5L0 10Z" fill="#444"/></svg>
<svg class="i" style="left:1812px;top:305px"><use href="#mat"/></svg>
<div class="t" style="left:1838px;top:308px">rattan_</div>

<div class="a" style="left:1631px;top:347px;width:221px;height:148px;background:#737373;border:1px solid #484848;border-radius:6px"></div>
<div class="a" style="left:1638px;top:354px;width:209px;height:23px;background:#5680c6;border-radius:4px"></div>
<svg class="i" style="left:1639px;top:356px"><circle cx="10" cy="10" r="8.5" fill="url(#balo)"/></svg>
<div class="t w" style="left:1666px;top:359px">rattan_carpet_beater</div>
<svg class="i" style="left:1638px;top:473px;opacity:.7"><use href="#cp"/></svg>
<div class="a" style="left:1745px;top:482px;width:18px;height:4.5px;border-top:1px solid #ddd;border-bottom:1px solid #ddd"></div>
<div class="b rt" style="left:1864px;top:348px;width:24px;height:25px"></div>
<div class="b" style="left:1864px;top:372px;width:24px;height:25px"></div>
<div class="b k rb" style="left:1864px;top:396px;width:24px;height:25px"></div>
<svg class="i" style="left:1866px;top:350px"><use href="#plus"/></svg>
<svg class="i" style="left:1866px;top:374px"><path d="M3 10H17" stroke="#222" stroke-width="5"/><path d="M4 10H16" stroke="#eee" stroke-width="2.6"/></svg>
<svg class="i" style="left:1866px;top:399px"><path d="M4 3H16L11 15Z" fill="#111"/><path d="M12 15L14 9" stroke="#ddd" stroke-width="1.5"/></svg>

<div class="b k rl" style="left:1631px;top:503px;width:38px;height:24px"></div>
<svg class="i" style="left:1636px;top:505px"><use href="#mat"/></svg>
<svg class="i" style="left:1656px;top:505px;width:10px"><use href="#ud"/></svg>
<div class="b" style="left:1668px;top:503px;width:50px;height:24px;background:linear-gradient(#9e9e9e,#b8b8b8);padding-left:8px;line-height:26px">ratta</div>
<div class="b" style="left:1717px;top:503px;width:25px;height:24px;padding-left:7px;line-height:26px">F</div>
<div class="b" style="left:1741px;top:503px;width:25px;height:24px"></div>
<div class="b rr" style="left:1765px;top:503px;width:26px;height:24px"></div>
<svg class="i" style="left:1744px;top:505px"><use href="#plus"/></svg>
<svg class="i" style="left:1768px;top:505px"><use href="#x"/></svg>
<div class="b k r" style="left:1801px;top:503px;width:87px;height:24px;line-height:26px">Data</div>
<svg class="i" style="left:1875px;top:505px;width:10px"><use href="#ud"/></svg>

<div class="sep" style="left:1626px;top:536px;width:267px"></div>
<div class="tr" style="left:1635px;top:547px"></div>
<div class="t h" style="left:1651px;top:544px;color:#1a1a1a">Custom Properties</div>
<svg class="a" style="left:1873px;top:548px" width="15" height="8"><use href="#grip"/></svg>
<div class="sep" style="left:1626px;top:566px;width:267px"></div>
<div class="td" style="left:1635px;top:575px"></div>
<div class="t h" style="left:1651px;top:573px;color:#1a1a1a">Preview</div>
<svg class="a" style="left:1873px;top:577px" width="15" height="8"><use href="#grip"/></svg>

<svg class="a" style="left:0;top:0" width="1920" height="1042">
<rect x="1631" y="605.5" width="210" height="122" rx="6" fill="url(#chk)" stroke="#3c3c3c"/>
<path d="M1632 670H1840V721q0 6-6 6H1638q-6 0-6-6Z" fill="url(#flr)" mask="url(#fm)"/>
<circle cx="1736" cy="665" r="57" fill="url(#mag)"/>
<path clip-path="url(#sph)" d="M1750 606C1745 640 1712 660 1704 690C1702 705 1718 718 1733 724L1800 724L1800 600Z" fill="#000"/>
</svg>
<div class="a" style="left:1727px;top:731px;width:18px;height:5px;border-top:1px solid #ddd;border-bottom:1px solid #ddd"></div>
<div class="b k rt" style="left:1851px;top:606px;width:37px;height:25px"></div>
<div class="b" style="left:1851px;top:630px;width:37px;height:25px;background:linear-gradient(#4f7cc4,#6a94d4)"></div>
<div class="b k" style="left:1851px;top:655px;width:37px;height:25px"></div>
<div class="b k" style="left:1851px;top:680px;width:37px;height:25px"></div>
<div class="b k" style="left:1851px;top:704px;width:37px;height:25px"></div>
<div class="b k rb" style="left:1851px;top:729px;width:37px;height:25px"></div>
<svg class="a" style="left:1851px;top:606px" width="37" height="148">
<rect x="11" y="5" width="15" height="15" fill="#a6a6a6"/>
<circle cx="18.5" cy="37" r="8" fill="url(#balw)" stroke="#111"/>
<polygon points="18.5,53 26,57 26,67 18.5,71 11,67 11,57" fill="#9a9a9a"/><polygon points="18.5,53 26,57 18.5,61 11,57" fill="#c2c2c2"/>
<path d="M13 84Q18.5 76 24 84L25 87L21 89V96H16V89L12 87Z" fill="#bcbcbc"/>
<path d="M13 120C13 112 17 106 21 104M18 120C18 113 20 109 24 106M23 120C23 116 25 113 27 112" fill="none" stroke="#cfcfcf" stroke-width="1.5"/>
<circle cx="15" cy="138" r="6" fill="url(#balw)"/><circle cx="15" cy="129" r="2.4" fill="#d4d27c"/><path d="M20 130q5-6 9 0z" fill="#7f9ab8"/>
</svg>

<div class="sep" style="left:1626px;top:764px;width:267px"></div>
<div class="td" style="left:1635px;top:774px"></div>
<div class="t h" style="left:1651px;top:771px;color:#1a1a1a">Surface</div>
<svg class="a" style="left:1873px;top:776px" width="15" height="8"><use href="#grip"/></svg>
<div class="t" style="left:1640px;top:810px">Surface:</div>
<div class="b k r" style="left:1727px;top:804px;width:161px;height:25px;line-height:28px">PBR.000</div>
<svg class="a" style="left:1869px;top:811px" width="10" height="10"><circle cx="5" cy="5" r="2.5" fill="#777" stroke="#ddd" stroke-width=".8"/></svg>
<svg class="i" style="left:1626px;top:849px"><use href="#cp"/></svg>
<div class="t" style="left:1652px;top:853px">is Metallic</div>
<div class="b k r" style="left:1727px;top:848px;width:161px;height:25px;line-height:28px">Separate RGB</div>
<svg class="a" style="left:1869px;top:855px" width="10" height="10"><circle cx="5" cy="5" r="2.5" fill="#777" stroke="#ddd" stroke-width=".8"/></svg>
<svg class="i" style="left:1626px;top:880px"><use href="#cp"/></svg>
<div class="t" style="left:1652px;top:883px">Color - Ma</div>
<div class="b k r" style="left:1727px;top:879px;width:161px;height:25px;background:linear-gradient(#4f6488,#445a7c);line-height:28px">Image Texture</div>
<svg class="a" style="left:1869px;top:886px" width="10" height="10"><circle cx="5" cy="5" r="2.5" fill="#777" stroke="#ddd" stroke-width=".8"/></svg>
<svg class="i" style="left:1626px;top:911px"><use href="#cp"/></svg>
<div class="t" style="left:1652px;top:915px">Color - Ab</div>
<div class="b k r" style="left:1727px;top:910px;width:161px;height:25px;line-height:28px">Separate RGB</div>
<svg class="a" style="left:1869px;top:917px" width="10" height="10"><circle cx="5" cy="5" r="2.5" fill="#777" stroke="#ddd" stroke-width=".8"/></svg>
<svg class="i" style="left:1626px;top:942px"><use href="#cp"/></svg>
<div class="t" style="left:1652px;top:946px">Alpha:</div>
<div class="b k r" style="left:1727px;top:941px;width:161px;height:25px;line-height:28px">Image Texture</div>
<svg class="a" style="left:1869px;top:948px" width="10" height="10"><circle cx="5" cy="5" r="2.5" fill="#777" stroke="#ddd" stroke-width=".8"/></svg>
<div class="t" style="left:1652px;top:978px">Transluce</div>
<div class="b" style="left:1727px;top:972px;width:136px;height:25px;border-radius:10px 0 0 10px;background:linear-gradient(90deg,#6e6e6e 0 12px,#b4b4b4 12px);padding:0 0 0 78px;text-align:left;line-height:28px">0.000</div>
<div class="b k rr" style="left:1862px;top:972px;width:26px;height:25px"></div>
<svg class="a" style="left:1869px;top:979px" width="10" height="10"><circle cx="5" cy="5" r="2.5" fill="#777" stroke="#ddd" stroke-width=".8"/></svg>
<div class="t" style="left:1652px;top:1009px">Abs Stren</div>
<div class="ng" style="left:1727px;top:1003px;width:136px;height:25px;border-radius:10px 0 0 10px"><div class="n" style="padding-left:0;line-height:27px"><s style="right:21px">0.000</s></div></div>
<div class="b k rr" style="left:1862px;top:1003px;width:26px;height:25px"></div>
<svg class="a" style="left:1869px;top:1010px" width="10" height="10"><circle cx="5" cy="5" r="2.5" fill="#777" stroke="#ddd" stroke-width=".8"/></svg>
<div class="a" style="left:1727px;top:1034px;width:136px;height:6px;background:#b4b4b4;border:1px solid #3c3c3c;border-bottom:0;border-radius:10px 0 0 0"></div>
<div class="a" style="left:1862px;top:1034px;width:26px;height:6px;background:#555;border:1px solid #3c3c3c;border-bottom:0"></div>
<div class="a" style="left:0;top:1040px;width:1920px;height:2px;background:#efefef"></div>
</body></html>
